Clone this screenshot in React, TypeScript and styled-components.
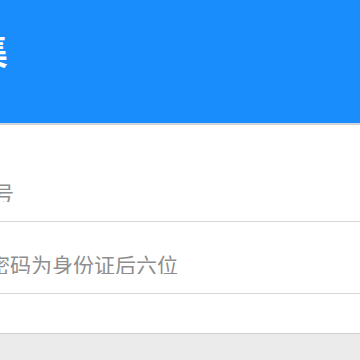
import React from 'react';
import styled, { createGlobalStyle } from 'styled-components';

const Global = createGlobalStyle`
  html, body {
    margin: 0;
    padding: 0;
    overflow: hidden;
    background: #ebebeb;
  }
  * { box-sizing: border-box; }
`;

const Page = styled.div`
  width: 360px;
  height: 360px;
  overflow: hidden;
  background: #ebebeb;
  font-family: "Noto Sans CJK SC", "Noto Sans", sans-serif;
`;

const Header = styled.header`
  height: 125px;
  background: #1a8dfd;
  border-bottom: 2px solid #cfd3d8;
  display: flex;
  align-items: flex-start;
  padding-top: 31px;
`;

const Title = styled.h1`
  margin: 0 0 0 -136px;
  font-size: 36px;
  line-height: 36px;
  font-weight: 700;
  color: #fff;
  white-space: nowrap;
`;

const Form = styled.form`
  background: #fff;
  padding-top: 25px;
  border-bottom: 1px solid #cfcfcf;
`;

const Field = styled.label`
  height: 72px;
  display: flex;
  align-items: flex-end;
  padding-bottom: 19px;
  border-bottom: 1px solid #d6d6d6;
  overflow: hidden;
`;

const Input = styled.input<{ $shift: number }>`
  margin-left: ${p => -p.$shift}px;
  width: calc(100% + ${p => p.$shift}px);
  height: 21px;
  border: none;
  outline: none;
  padding: 0;
  background: transparent;
  font-family: inherit;
  font-size: 21px;
  line-height: 21px;
  color: #333;
  &::placeholder { color: #8e8e8e; }
`;

const Spacer = styled.div`
  height: 39px;
`;

export default function App() {
  return (
    <Page>
      <Global />
      <Header>
        <Title>信息采集</Title>
      </Header>
      <Form>
        <Field>
          <Input $shift={91} placeholder="请输入学号" />
        </Field>
        <Field>
          <Input $shift={11} type="password" placeholder="密码为身份证后六位" />
        </Field>
        <Spacer />
      </Form>
    </Page>
  );
}
